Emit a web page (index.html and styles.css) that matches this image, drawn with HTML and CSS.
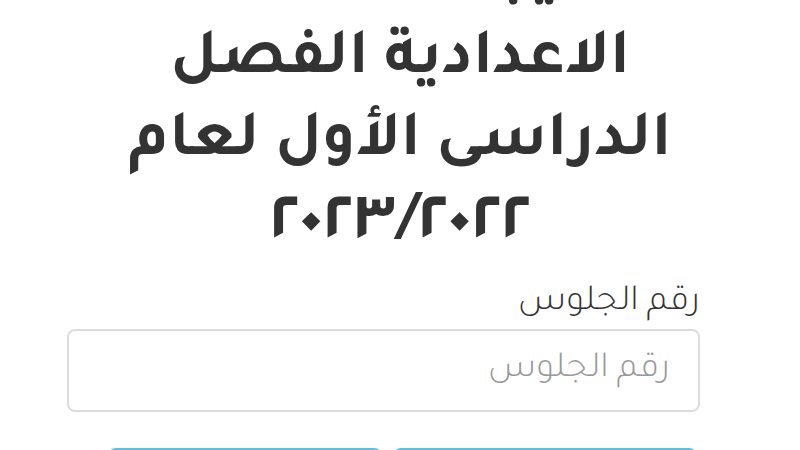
FILE: index.html
```html
<!DOCTYPE html>
<html lang="ar" dir="rtl">
<head><meta charset="utf-8"><title>نتيجة الشهادة الاعدادية</title><link rel="stylesheet" href="styles.css"></head>
<body>
<main class="page">
  <h1 class="title">نتيجة الشهادة الاعدادية الفصل الدراسى الأول لعام <span class="year">٢٠٢٣/٢٠٢٢</span></h1>
  <form class="form">
    <label class="label" for="seat">رقم الجلوس</label>
    <input class="input" id="seat" type="text" placeholder="رقم الجلوس">
    <div class="actions">
      <button class="btn btn-search" type="submit">بحث</button>
      <button class="btn btn-clear" type="reset">مسح</button>
    </div>
  </form>
</main>
</body>
</html>
```
FILE: styles.css
```css
html, body { margin: 0; padding: 0; background: #fff; }
body { font-family: "Tajawal", "Noto Sans Arabic", "DejaVu Sans", sans-serif; color: #333; }
.page { display: flex; flex-direction: column; }
.title {
  margin: -60px auto 0;
  width: 600px;
  text-align: center;
  font-size: 65px;
  line-height: 82px;
  font-weight: 700;
  color: #333;
}
.year { font-size: 71px; line-height: 82px; }
.form { margin: 12px 100px 0 67px; display: flex; flex-direction: column; }
.label { font-size: 37px; font-weight: 300; color: #333; line-height: 46px; margin-bottom: 2px; }
.input {
  box-sizing: border-box;
  height: 83px;
  border: 2px solid #dcdcdc;
  border-radius: 8px;
  padding: 0 28px;
  font-family: inherit;
  font-size: 37px;
  font-weight: 300;
  color: #333;
  background: #fff;
  outline: none;
}
.input::placeholder { color: #999; }
.actions {
  display: grid;
  grid-template-columns: 304px 274px;
  justify-content: start;
  gap: 11px;
  margin: 36px 3px 0 41px;
}
.btn {
  height: 60px;
  border: 2px solid #5bc0de;
  border-radius: 8px;
  background: #5bc0de;
  color: #fff;
  font-family: inherit;
  font-size: 26px;
}
```
